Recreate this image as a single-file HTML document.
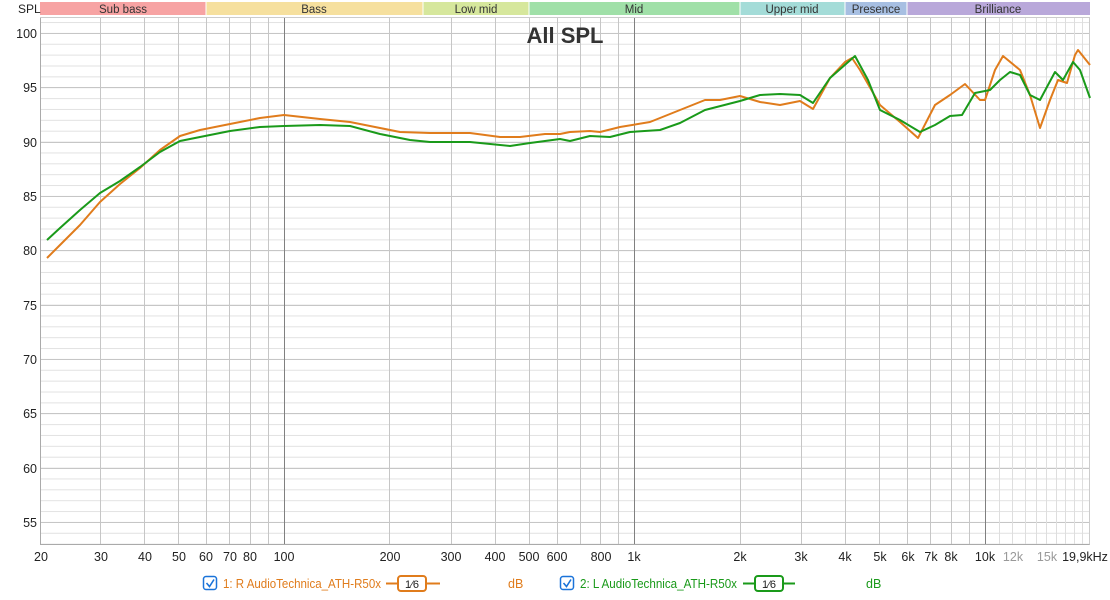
<!DOCTYPE html>
<html><head><meta charset="utf-8"><style>
body{margin:0;background:#fff;width:1110px;height:595px;overflow:hidden;font-family:"Liberation Sans",sans-serif}
</style></head><body>
<svg width="1110" height="595" xmlns="http://www.w3.org/2000/svg" font-family="Liberation Sans, sans-serif">
<defs>
<pattern id="hp" patternUnits="userSpaceOnUse" x="0" y="0.3" width="1110" height="10.867">
<line x1="0" y1="0.5" x2="1110" y2="0.5" stroke="#e2e2e2" stroke-width="1"/>
</pattern>
</defs>
<g font-size="11.5" fill="#333" text-anchor="middle">
<rect x="40" y="2" width="166" height="13" fill="#f7a3a3"/><text x="123" y="13">Sub bass</text>
<rect x="206" y="2" width="217" height="13" fill="#f6e09e"/><text x="314" y="13">Bass</text>
<rect x="423" y="2" width="106" height="13" fill="#d6e79c"/><text x="476" y="13">Low mid</text>
<rect x="529" y="2" width="211" height="13" fill="#a0e0a8"/><text x="634" y="13">Mid</text>
<rect x="740" y="2" width="105" height="13" fill="#a4dcd8"/><text x="792" y="13">Upper mid</text>
<rect x="845" y="2" width="62" height="13" fill="#a7bfe2"/><text x="876" y="13">Presence</text>
<rect x="907" y="2" width="183" height="13" fill="#b9a8da"/><text x="998" y="13">Brilliance</text>
</g>
<line x1="206" y1="2" x2="206" y2="15" stroke="#fff"/><line x1="423" y1="2" x2="423" y2="15" stroke="#fff"/><line x1="529" y1="2" x2="529" y2="15" stroke="#fff"/><line x1="740" y1="2" x2="740" y2="15" stroke="#fff"/><line x1="845" y1="2" x2="845" y2="15" stroke="#fff"/><line x1="907" y1="2" x2="907" y2="15" stroke="#fff"/>
<text x="18" y="13" font-size="12" fill="#222">SPL</text>
<rect x="40" y="17" width="1050" height="527" fill="url(#hp)"/>
<g stroke="#c6c6c6" stroke-width="1">
<line x1="40" y1="33.5" x2="1090" y2="33.5"/><line x1="40" y1="87.5" x2="1090" y2="87.5"/><line x1="40" y1="142.5" x2="1090" y2="142.5"/><line x1="40" y1="196.5" x2="1090" y2="196.5"/><line x1="40" y1="250.5" x2="1090" y2="250.5"/><line x1="40" y1="305.5" x2="1090" y2="305.5"/><line x1="40" y1="359.5" x2="1090" y2="359.5"/><line x1="40" y1="413.5" x2="1090" y2="413.5"/><line x1="40" y1="468.5" x2="1090" y2="468.5"/><line x1="40" y1="522.5" x2="1090" y2="522.5"/>
</g>
<g stroke="#c6c6c6" stroke-width="1">
<line x1="100.5" y1="17" x2="100.5" y2="544"/><line x1="144.5" y1="17" x2="144.5" y2="544"/><line x1="178.5" y1="17" x2="178.5" y2="544"/><line x1="206.5" y1="17" x2="206.5" y2="544"/><line x1="229.5" y1="17" x2="229.5" y2="544"/><line x1="250.5" y1="17" x2="250.5" y2="544"/><line x1="268.5" y1="17" x2="268.5" y2="544"/>
<line x1="389.5" y1="17" x2="389.5" y2="544"/><line x1="451.5" y1="17" x2="451.5" y2="544"/><line x1="495.5" y1="17" x2="495.5" y2="544"/><line x1="529.5" y1="17" x2="529.5" y2="544"/><line x1="557.5" y1="17" x2="557.5" y2="544"/><line x1="580.5" y1="17" x2="580.5" y2="544"/><line x1="600.5" y1="17" x2="600.5" y2="544"/><line x1="618.5" y1="17" x2="618.5" y2="544"/>
<line x1="740.5" y1="17" x2="740.5" y2="544"/><line x1="801.5" y1="17" x2="801.5" y2="544"/><line x1="845.5" y1="17" x2="845.5" y2="544"/><line x1="879.5" y1="17" x2="879.5" y2="544"/><line x1="907.5" y1="17" x2="907.5" y2="544"/><line x1="930.5" y1="17" x2="930.5" y2="544"/><line x1="951.5" y1="17" x2="951.5" y2="544"/><line x1="969.5" y1="17" x2="969.5" y2="544"/>
</g>
<g stroke="#dedede" stroke-width="1">
<line x1="999.5" y1="17" x2="999.5" y2="544"/><line x1="1012.5" y1="17" x2="1012.5" y2="544"/><line x1="1025.5" y1="17" x2="1025.5" y2="544"/><line x1="1036.5" y1="17" x2="1036.5" y2="544"/><line x1="1046.5" y1="17" x2="1046.5" y2="544"/><line x1="1056.5" y1="17" x2="1056.5" y2="544"/><line x1="1065.5" y1="17" x2="1065.5" y2="544"/><line x1="1074.5" y1="17" x2="1074.5" y2="544"/><line x1="1082.5" y1="17" x2="1082.5" y2="544"/>
</g>
<g stroke="#808080" stroke-width="1">
<line x1="284.5" y1="17" x2="284.5" y2="544"/><line x1="634.5" y1="17" x2="634.5" y2="544"/><line x1="985.5" y1="17" x2="985.5" y2="544"/>
</g>
<line x1="40.5" y1="17" x2="40.5" y2="544.5" stroke="#aaa"/>
<line x1="40" y1="544.5" x2="1090" y2="544.5" stroke="#aaa"/>
<line x1="1089.5" y1="17" x2="1089.5" y2="544.5" stroke="#ccc"/>
<line x1="40" y1="17.5" x2="1090" y2="17.5" stroke="#ccc"/>
<g font-size="12.5" fill="#222" text-anchor="end">
<text x="37" y="38">100</text><text x="37" y="92">95</text><text x="37" y="147">90</text><text x="37" y="201">85</text><text x="37" y="255">80</text><text x="37" y="310">75</text><text x="37" y="364">70</text><text x="37" y="418">65</text><text x="37" y="473">60</text><text x="37" y="527">55</text>
</g>
<g font-size="12.5" fill="#222" text-anchor="middle">
<text x="41" y="561">20</text><text x="101" y="561">30</text><text x="145" y="561">40</text><text x="179" y="561">50</text><text x="206" y="561">60</text><text x="230" y="561">70</text><text x="250" y="561">80</text><text x="284" y="561">100</text>
<text x="390" y="561">200</text><text x="451" y="561">300</text><text x="495" y="561">400</text><text x="529" y="561">500</text><text x="557" y="561">600</text><text x="601" y="561">800</text><text x="634" y="561">1k</text>
<text x="740" y="561">2k</text><text x="801" y="561">3k</text><text x="845" y="561">4k</text><text x="880" y="561">5k</text><text x="908" y="561">6k</text><text x="931" y="561">7k</text><text x="951" y="561">8k</text><text x="985" y="561">10k</text>
<text x="1013" y="561" fill="#999">12k</text><text x="1047" y="561" fill="#999">15k</text><text x="1085" y="561">19,9kHz</text>
</g>
<text x="565" y="43" font-size="22" font-weight="bold" fill="#333" text-anchor="middle">All SPL</text>
<polyline fill="none" stroke="#e07c1c" stroke-width="2" stroke-linejoin="round" points="47,258 60,245 80,225 100,202 120,184 140,168 160,150 180,136 200,130 230,124 260,118 284,115 320,119 350,122 380,128 400,132 430,133 470,133 500,137 520,137 545,134 560,134 570,132 590,131 600,132 620,127 650,122 680,110 705,100 720,100 740,96 760,102 780,105 800,101 813,109 830,78 845,62 852,58 860,70 880,105 900,122 918,138 935,105 950,95 965,84 980,100 985,100 995,70 1003,56 1020,70 1030,95 1040,128 1050,100 1058,80 1067,83 1075,55 1078,50 1090,65"/>
<polyline fill="none" stroke="#1a9a1a" stroke-width="2" stroke-linejoin="round" points="47,240 60,228 80,210 100,193 120,181 140,167 160,152 180,141 210,135 230,131 260,127 284,126 320,125 350,126 380,134 410,140 430,142 470,142 510,146 530,143 560,139 570,141 590,136 610,137 630,132 660,130 680,123 705,110 740,101 760,95 780,94 800,95 813,103 830,78 855,56 868,80 880,110 900,120 920,132 935,125 950,116 962,115 975,93 990,90 1000,80 1010,72 1020,75 1030,95 1040,100 1048,85 1055,72 1063,80 1073,62 1080,70 1090,98"/>
<rect x="203.5" y="576.5" width="13" height="13" rx="2.5" fill="#fff" stroke="#1a73d9" stroke-width="1.5"/>
<path d="M206.5 583 L209.5 586.5 L214 579.5" fill="none" stroke="#1a73d9" stroke-width="1.6"/>
<text x="223" y="588" font-size="12.5" fill="#e07c1c" textLength="158" lengthAdjust="spacingAndGlyphs">1: R AudioTechnica_ATH-R50x</text>
<line x1="386" y1="583.5" x2="440" y2="583.5" stroke="#e07c1c" stroke-width="2"/>
<rect x="398" y="576" width="28" height="15" rx="3" fill="#fff" stroke="#e07c1c" stroke-width="2"/>
<text x="412" y="588" font-size="11" fill="#222" text-anchor="middle">1⁄6</text>
<text x="508" y="588" font-size="12.5" fill="#e07c1c">dB</text>
<rect x="560.5" y="576.5" width="13" height="13" rx="2.5" fill="#fff" stroke="#1a73d9" stroke-width="1.5"/>
<path d="M563.5 583 L566.5 586.5 L571 579.5" fill="none" stroke="#1a73d9" stroke-width="1.6"/>
<text x="580" y="588" font-size="12.5" fill="#1a9a1a" textLength="157" lengthAdjust="spacingAndGlyphs">2: L AudioTechnica_ATH-R50x</text>
<line x1="743" y1="583.5" x2="795" y2="583.5" stroke="#1a9a1a" stroke-width="2"/>
<rect x="755" y="576" width="28" height="15" rx="3" fill="#fff" stroke="#1a9a1a" stroke-width="2"/>
<text x="769" y="588" font-size="11" fill="#222" text-anchor="middle">1⁄6</text>
<text x="866" y="588" font-size="12.5" fill="#1a9a1a">dB</text>
</svg>
</body></html>
